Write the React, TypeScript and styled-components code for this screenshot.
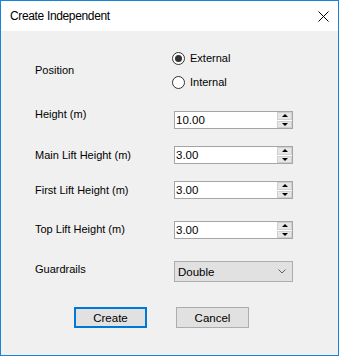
import styled, { createGlobalStyle } from 'styled-components';

const BLUE = '#1883d7';
const UI_FONT = '"Liberation Sans", Arial, sans-serif';

const GlobalStyle = createGlobalStyle`
  html, body {
    margin: 0;
    padding: 0;
    background: #f0f0f0;
  }
  * {
    box-sizing: border-box;
  }
`;

const Window = styled.div`
  width: 339px;
  height: 356px;
  border: 1px solid ${BLUE};
  display: flex;
  flex-direction: column;
  background: #f0f0f0;
  font-family: ${UI_FONT};
  font-size: 11px;
  color: #000;
`;

const TitleBar = styled.div`
  height: 30px;
  background: #fff;
  display: flex;
  align-items: center;
  justify-content: space-between;
  padding: 0 9px 0 9px;
`;

const Title = styled.span`
  font-size: 12px;
  letter-spacing: -0.35px;
  color: #000;
`;

const CloseButton = styled.div`
  width: 12px;
  height: 12px;
  display: flex;
  align-items: center;
  justify-content: center;
`;

const Body = styled.div`
  flex: 1;
  padding: 15px 0 0 34px;
  display: flex;
  flex-direction: column;
`;

interface RowProps {
  gap?: number;
  height: number;
}

const Row = styled.div<RowProps>`
  display: flex;
  align-items: center;
  height: ${(p) => p.height}px;
  margin-top: ${(p) => p.gap ?? 0}px;
`;

const Label = styled.span<{ shift?: number }>`
  width: 139px;
  position: relative;
  top: ${(p) => p.shift ?? 0}px;
`;

const RadioGroup = styled.div`
  display: flex;
  flex-direction: column;
`;

const RadioRow = styled.label`
  display: flex;
  align-items: center;
  height: 24px;
  margin-left: -2px;
`;

const RadioCircle = styled.span<{ checked?: boolean }>`
  width: 13px;
  height: 13px;
  border-radius: 50%;
  border: 1px solid #333;
  background: #fff;
  display: flex;
  align-items: center;
  justify-content: center;
  margin-right: 5px;

  &::after {
    content: '';
    width: 7px;
    height: 7px;
    border-radius: 50%;
    background: #333;
    display: ${(p) => (p.checked ? 'block' : 'none')};
  }
`;

const SpinBox = styled.div`
  width: 119px;
  height: 18px;
  border: 1px solid #a5a5a5;
  background: #fff;
  display: flex;
  align-items: stretch;
`;

const SpinText = styled.span`
  flex: 1;
  padding-left: 1px;
  line-height: 16px;
  font-size: 11.5px;
`;

const SpinButtons = styled.div`
  width: 16px;
  display: flex;
  flex-direction: column;
  gap: 1px;
  padding: 0 0 0 1px;
  background: #fff;
`;

const SpinButton = styled.div<{ down?: boolean }>`
  flex: 1;
  background: #e6e6e6;
  border: 1px solid #cfcfcf;
  display: flex;
  align-items: center;
  justify-content: center;

  &::after {
    content: '';
    width: 0;
    height: 0;
    border-left: 3px solid transparent;
    border-right: 3px solid transparent;
    ${(p) =>
      p.down ? 'border-top: 3px solid #000;' : 'border-bottom: 3px solid #000;'}
  }
`;

const Select = styled.div`
  width: 119px;
  height: 21px;
  border: 1px solid #adadad;
  background: #e1e1e1;
  display: flex;
  align-items: center;
  justify-content: space-between;
  padding: 0 6px 0 3px;
  font-size: 11.5px;
`;

const ButtonRow = styled.div`
  display: flex;
  gap: 29px;
  padding-left: 39px;
  margin-top: 25px;
`;

const Button = styled.button<{ primary?: boolean }>`
  width: 73px;
  height: 21px;
  font-family: ${UI_FONT};
  font-size: 11.5px;
  color: #000;
  background: #e1e1e1;
  border: ${(p) => (p.primary ? '2px solid #0078d7' : '1px solid #adadad')};
  padding: 0;
  margin: 0;
`;

const Radio = ({ label, checked }: { label: string; checked?: boolean }) => (
  <RadioRow>
    <RadioCircle checked={checked} />
    {label}
  </RadioRow>
);

const NumberInput = ({ value }: { value: string }) => (
  <SpinBox>
    <SpinText>{value}</SpinText>
    <SpinButtons>
      <SpinButton />
      <SpinButton down />
    </SpinButtons>
  </SpinBox>
);

const App = () => (
  <>
    <GlobalStyle />
    <Window>
      <TitleBar>
        <Title>Create Independent</Title>
        <CloseButton>
          <svg width="11" height="11" viewBox="0 0 11 11">
            <path d="M0.5 0.5 L10.5 10.5 M10.5 0.5 L0.5 10.5" stroke="#000" strokeWidth="1" />
          </svg>
        </CloseButton>
      </TitleBar>
      <Body>
        <Row height={48}>
          <Label>Position</Label>
          <RadioGroup>
            <Radio label="External" checked />
            <Radio label="Internal" />
          </RadioGroup>
        </Row>
        <Row height={18} gap={17}>
          <Label shift={-6}>Height (m)</Label>
          <NumberInput value="10.00" />
        </Row>
        <Row height={18} gap={17}>
          <Label>Main Lift Height (m)</Label>
          <NumberInput value="3.00" />
        </Row>
        <Row height={18} gap={17}>
          <Label>First Lift Height (m)</Label>
          <NumberInput value="3.00" />
        </Row>
        <Row height={18} gap={22}>
          <Label shift={-1}>Top Lift Height (m)</Label>
          <NumberInput value="3.00" />
        </Row>
        <Row height={21} gap={22}>
          <Label shift={-3}>Guardrails</Label>
          <Select>
            Double
            <svg width="8" height="5" viewBox="0 0 8 5">
              <path d="M0.5 0.5 L4 4 L7.5 0.5" stroke="#606060" fill="none" strokeWidth="1" />
            </svg>
          </Select>
        </Row>
        <ButtonRow>
          <Button primary>Create</Button>
          <Button>Cancel</Button>
        </ButtonRow>
      </Body>
    </Window>
  </>
);

export default App;
